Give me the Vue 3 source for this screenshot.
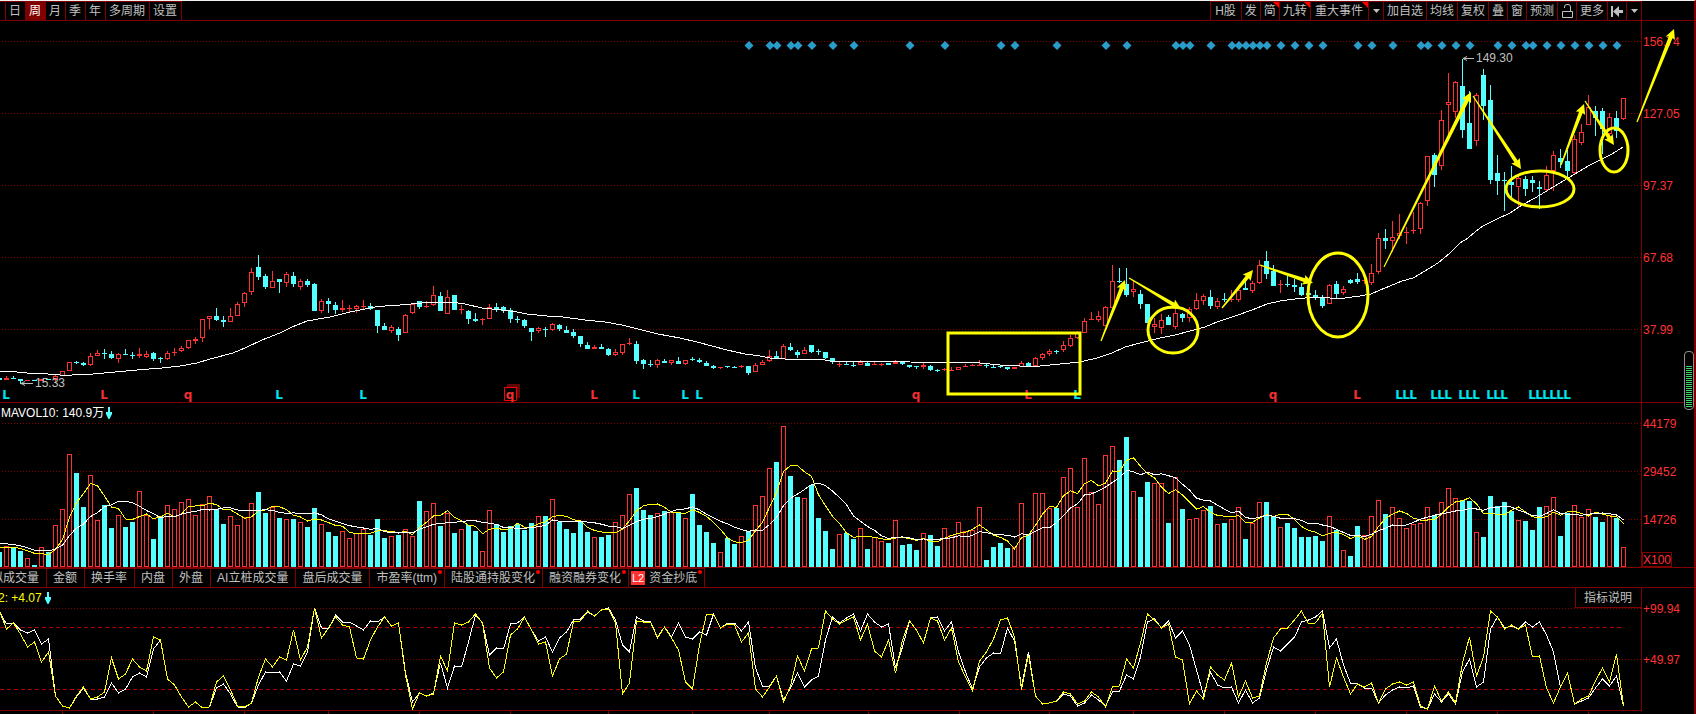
<script setup>
const STEP = 7
const FIRST = -1
const centre = (i) => 6 + STEP * i

/* One entry per week: colour, high, body top, body bottom, low */
const candleRows = `
c 378 378 379 379,r 376 378 379 379,c 376 378 378 378,c 379 379 380 383,r 380 380 380 380,c 380 380 380 380,r 379 379 380 380,c 379 379 379 379,r 375 376 379 382,r 371 371 375 375,
r 362 362 370 370,c 361 362 362 363,c 362 363 364 365,r 353 356 364 365,r 350 353 355 355,c 349 353 353 358,c 351 354 357 358,r 353 354 358 362,c 349 354 354 354,c 352 355 355 358,
r 348 354 355 357,r 351 354 356 357,c 352 353 358 360,c 357 358 358 362,r 351 353 358 359,r 348 352 352 355,r 346 348 350 351,r 340 340 347 348,r 337 339 340 343,r 319 319 337 341,
r 316 316 318 328,c 308 316 319 320,c 316 320 321 326,r 308 316 321 321,r 302 304 315 315,r 292 293 302 306,r 268 272 291 294,c 255 267 276 279,c 274 276 286 288,r 271 281 287 287,
c 279 279 281 292,r 272 274 282 286,c 272 276 283 286,r 279 281 286 289,c 279 281 284 286,c 283 284 310 310,r 299 301 310 312,c 298 301 303 312,c 302 305 309 313,r 300 308 309 311,
r 305 308 308 311,r 305 306 308 312,r 300 306 306 309,c 303 306 308 309,c 310 310 325 332,c 323 326 329 329,r 325 327 330 332,c 327 329 334 340,r 314 315 332 332,r 303 304 312 313,
c 301 301 306 308,r 301 306 306 307,r 286 295 304 305,c 292 296 310 310,r 290 297 313 313,c 295 295 309 309,r 305 309 309 313,c 310 311 318 323,c 313 319 320 321,r 318 319 319 324,
r 304 307 318 318,c 303 307 309 311,c 306 307 310 312,c 308 310 318 322,c 316 319 319 322,c 319 320 325 327,c 328 328 331 340,r 327 328 330 332,c 327 329 329 336,r 323 324 329 330,
c 324 325 328 330,c 326 330 332 332,c 329 332 335 337,c 336 336 343 346,c 342 345 348 348,r 345 347 348 348,c 344 347 348 348,c 348 349 354 355,r 349 352 354 355,r 344 344 352 354,
r 338 343 343 344,c 341 344 360 363,c 359 360 363 368,c 360 364 364 366,r 359 360 364 367,c 359 361 362 362,r 360 360 362 364,c 357 361 363 363,r 360 360 363 364,c 357 359 359 360,
c 358 360 361 362,c 361 363 365 365,c 365 366 367 368,r 367 367 367 368,c 366 366 366 367,c 366 367 367 367,r 365 366 366 367,c 366 366 372 374,r 363 365 371 371,r 360 362 364 364,
r 350 356 360 361,c 351 356 358 358,r 344 346 358 358,c 343 347 349 350,c 350 352 354 357,r 347 350 353 353,c 345 345 351 352,c 349 351 351 354,c 352 352 357 358,c 358 358 361 363,
r 362 364 364 366,c 362 364 364 364,c 362 365 365 366,r 360 362 364 364,c 362 363 365 365,r 362 364 364 364,r 363 364 364 365,c 363 363 364 364,r 360 362 363 363,c 362 362 363 364,
c 365 365 366 367,c 366 366 366 368,r 363 365 366 368,c 365 366 369 370,c 369 370 370 371,r 368 369 369 370,r 367 370 370 370,r 367 367 369 369,r 364 366 366 366,r 364 365 365 365,
r 360 365 365 365,c 364 365 365 367,c 365 367 367 367,c 365 366 366 367,c 367 367 368 369,r 367 367 368 368,r 361 363 366 366,c 362 363 365 365,r 357 358 365 365,r 353 354 357 359,
r 349 351 353 355,c 350 351 351 353,r 341 345 349 351,r 335 338 345 346,r 331 333 337 338,r 318 321 332 332,r 312 319 319 319,r 311 316 319 321,r 306 307 325 325,r 265 281 307 307,
c 268 281 281 282,c 268 284 294 296,r 280 289 291 296,c 290 294 303 308,c 304 304 322 322,r 318 324 326 332,r 314 320 327 333,c 315 317 324 324,r 309 313 326 328,c 313 314 317 321,
r 307 309 317 321,r 293 300 308 309,r 294 296 300 304,c 290 297 305 308,r 298 301 306 308,c 293 299 299 301,r 290 299 299 301,r 285 290 299 301,c 280 288 289 289,r 281 283 290 292,
r 260 265 282 283,c 251 261 273 278,c 265 271 285 285,r 280 284 284 292,c 276 284 284 286,c 279 285 286 291,c 283 287 294 295,c 292 293 294 294,c 290 295 296 299,c 295 297 305 307,
r 284 285 303 303,c 281 284 293 297,r 286 289 292 294,c 279 280 282 283,c 273 279 281 283,r 276 280 280 283,r 264 273 282 284,r 233 238 271 273,c 229 238 240 248,r 221 237 240 251,
r 214 233 235 238,r 227 232 232 243,r 212 230 230 233,r 202 203 228 233,r 156 156 200 205,c 153 155 174 186,r 110 120 165 169,r 73 102 104 140,r 81 82 111 117,c 59 86 129 137,
c 91 123 148 148,r 93 95 140 145,c 69 75 105 119,c 85 100 179 183,c 155 173 180 194,c 172 180 180 210,c 166 182 184 197,r 176 178 186 206,c 176 179 188 195,c 176 180 182 191,
c 181 187 188 208,r 166 175 189 191,r 151 155 170 190,c 149 158 161 167,c 150 161 170 176,r 135 139 172 173,r 124 132 142 144,r 95 107 124 124,c 106 111 117 135,c 108 111 128 153,
r 113 117 133 137,c 111 118 130 137,r 98 98 118 119`

const candles = candleRows.trim().split(',').map((row, n) => {
  const [kind, ...v] = row.trim().split(' ')
  const [high, top, bottom, low] = v.map(Number)
  return { id: n, up: kind === 'r', x: centre(n + FIRST), high, top, bottom, low }
})

const VOLUME_BASE = 567
const earlierVolumes = [539, 539, 539, 539, 539, 546, 546, 546, 546]
const volumeTops = [
  552, 546, 547, 551, 558, 565, 547, 552, 525, 509, 454, 473, 507, 475, 520, 505, 528, 515, 527, 522,
  491, 515, 539, 516, 505, 509, 502, 499, 515, 504, 496, 509, 524, 516, 525, 517, 503, 492, 513, 507,
  518, 519, 519, 522, 527, 508, 524, 532, 536, 531, 538, 533, 529, 535, 519, 538, 536, 535, 529, 536,
  501, 511, 503, 526, 513, 533, 529, 525, 531, 551, 510, 524, 532, 526, 524, 530, 523, 516, 516, 499,
  522, 529, 533, 521, 532, 537, 537, 535, 522, 515, 494, 488, 510, 515, 513, 511, 512, 513, 518, 494,
  525, 532, 543, 552, 538, 544, 536, 531, 505, 496, 468, 462, 426, 476, 497, 498, 485, 518, 531, 549,
  534, 533, 539, 528, 549, 537, 541, 543, 520, 545, 544, 550, 533, 535, 546, 528, 535, 522, 531, 530,
  507, 560, 547, 543, 548, 547, 503, 535, 493, 493, 508, 508, 477, 468, 507, 458, 492, 504, 455, 446,
  460, 437, 491, 497, 482, 483, 483, 523, 477, 509, 519, 518, 510, 506, 524, 523, 519, 507, 539, 523,
  502, 502, 517, 527, 523, 528, 537, 537, 536, 541, 516, 530, 550, 556, 526, 535, 516, 500, 514, 507,
  518, 528, 524, 523, 507, 515, 502, 488, 498, 500, 501, 532, 537, 496, 506, 502, 511, 520, 521, 530,
  507, 506, 497, 536, 513, 505, 517, 509, 517, 522, 515, 518, 547,
]
const allVolumes = [...earlierVolumes, ...volumeTops]

function average(period) {
  return volumeTops.map((_, n) => {
    const end = n + earlierVolumes.length + 1
    const sum = allVolumes.slice(end - period, end).reduce((a, b) => a + b, 0)
    return sum / period
  })
}
const toPoints = (ys) => ys.map((y, n) => `${centre(n + FIRST) + 0.5},${y}`).join(' ')
const volumeMa5 = toPoints(average(5))
const volumeMa10 = toPoints(average(10))

const priceMa =
  '0,371 17,372 27,373 48,374 60,375 72,375 93,374 115,372 137,370 162,368 180,366 197,363 210,359 233,353 245,348 262,340 280,333 292,327 307,321 330,317 350,312 365,309 375,307 385,306 400,305 422,303 430,302 450,302 465,304 482,308 502,310 517,312 527,314 547,316 563,317 585,320 605,322 622,325 642,330 658,334 680,338 697,342 712,346 727,350 745,354 760,356 770,358 785,359 820,359 830,361 860,361 905,361 910,362 980,363 1000,365 1020,366 1040,366 1060,364 1080,362 1097,358 1112,353 1125,347 1140,343 1160,338 1175,335 1190,331 1205,327 1217,322 1235,316 1252,310 1267,304 1280,301 1295,299 1315,297 1330,298 1345,298 1360,296 1371,294 1380,290 1390,286 1402,281 1413,278 1425,271 1438,263 1450,253 1460,243 1468,238 1475,232 1483,226 1497,219 1510,213 1522,205 1535,198 1550,189 1568,178 1580,171 1590,165 1600,160 1612,154 1623,147'

const fastLine = toPoints([
  611, 629, 623, 634, 647, 642, 662, 652, 696, 706, 708, 696, 687, 699, 697, 692, 658, 679, 674, 659,
  667, 671, 637, 640, 679, 685, 697, 707, 702, 708, 707, 682, 676, 690, 706, 707, 703, 677, 659, 667,
  657, 660, 630, 660, 647, 608, 638, 628, 617, 625, 627, 658, 659, 640, 627, 617, 626, 623, 675, 709,
  693, 696, 694, 656, 671, 623, 625, 622, 614, 623, 668, 678, 672, 635, 629, 617, 630, 644, 642, 676,
  659, 654, 622, 621, 611, 616, 610, 609, 623, 694, 683, 621, 622, 622, 638, 627, 638, 650, 682, 689,
  645, 614, 614, 628, 624, 625, 642, 633, 689, 697, 687, 676, 702, 686, 656, 671, 649, 648, 611, 619,
  624, 620, 617, 640, 624, 651, 657, 640, 673, 640, 621, 630, 643, 618, 621, 640, 628, 662, 677, 691,
  661, 652, 639, 620, 618, 637, 690, 655, 696, 704, 703, 701, 692, 694, 704, 701, 692, 697, 707, 687,
  686, 659, 668, 643, 614, 620, 628, 624, 657, 660, 704, 691, 699, 667, 675, 680, 663, 697, 681, 698,
  696, 663, 638, 629, 628, 620, 611, 624, 623, 613, 687, 658, 677, 694, 684, 687, 683, 703, 689, 684,
  682, 685, 682, 706, 709, 686, 701, 692, 703, 663, 637, 676, 657, 611, 617, 629, 625, 629, 625, 657,
  656, 688, 703, 687, 673, 704, 699, 696, 681, 668, 682, 654, 706,
])
const slowLine = toPoints([
  612, 624, 623, 630, 633, 630, 644, 639, 696, 706, 708, 697, 688, 699, 699, 697, 683, 693, 689, 677,
  673, 677, 649, 640, 679, 685, 697, 707, 702, 708, 707, 688, 684, 694, 707, 708, 703, 685, 672, 673,
  672, 681, 664, 666, 652, 608, 628, 629, 615, 622, 622, 626, 630, 621, 622, 617, 626, 623, 673, 702,
  693, 696, 693, 663, 688, 666, 667, 642, 615, 623, 655, 648, 649, 624, 623, 617, 630, 641, 637, 652,
  638, 632, 620, 619, 612, 616, 610, 608, 620, 645, 652, 617, 621, 622, 637, 627, 637, 623, 637, 639,
  632, 635, 614, 628, 623, 623, 631, 622, 668, 686, 686, 676, 700, 688, 673, 687, 680, 676, 640, 617,
  623, 618, 614, 631, 614, 622, 627, 624, 668, 647, 621, 630, 643, 618, 617, 631, 622, 652, 672, 689,
  667, 658, 653, 654, 628, 641, 687, 652, 696, 704, 703, 701, 694, 696, 706, 703, 695, 700, 706, 692,
  691, 675, 679, 657, 622, 619, 628, 621, 638, 631, 645, 670, 695, 672, 685, 688, 687, 703, 690, 703,
  698, 670, 647, 651, 644, 637, 622, 620, 617, 611, 648, 639, 665, 683, 684, 688, 688, 703, 695, 690,
  687, 688, 686, 707, 709, 694, 702, 694, 704, 672, 659, 687, 682, 629, 617, 628, 626, 629, 622, 627,
  622, 635, 652, 687, 673, 704, 701, 698, 688, 679, 686, 676, 706,
])

const diamonds = [
  106, 109, 110, 112, 113, 115, 118, 121, 129, 134, 142, 144, 150, 157, 160, 167, 168, 169, 172, 175,
  176, 177, 178, 179, 180, 182, 184, 186, 188, 193, 195, 198, 202, 203, 205, 207, 209, 213, 215, 217,
  218, 220, 222, 224, 226, 228, 230,
]
const marks = [
  ...[14, 84, 146, 193].map((i) => ({ i, t: 'L', c: 'mark-red' })),
  ...[26, 72, 130, 181].map((i) => ({ i, t: 'q', c: 'mark-red' })),
  ...[0, 39, 51, 90, 97, 99, 153, 199, 200, 201, 204, 205, 206, 208, 209, 210, 212, 213, 214, 218, 219,
    220, 221, 222, 223].map((i) => ({ i, t: 'L', c: 'mark-cyan' })),
]

const priceTicks = [
  { y: 41, t: '156.74' },
  { y: 113, t: '127.05' },
  { y: 185, t: '97.37' },
  { y: 257, t: '67.68' },
  { y: 329, t: '37.99' },
]
const volumeTicks = [
  { y: 423, t: '44179' },
  { y: 471, t: '29452' },
  { y: 519, t: '14726' },
]
const oscTicks = [
  { y: 608, t: '+99.94' },
  { y: 659, t: '+49.97' },
]
const timeTicks = [62, 153, 244, 328, 419, 510, 608, 692, 769, 868, 959, 1049, 1133, 1224, 1315, 1406, 1497, 1588]

/* Tapered arrow: hair-thin tail, thick neck, solid head */
function arrow([x1, y1, x2, y2]) {
  const len = Math.hypot(x2 - x1, y2 - y1)
  const ux = (x2 - x1) / len
  const uy = (y2 - y1) / len
  const at = (along, side) =>
    `${(x1 + ux * along - uy * side).toFixed(1)},${(y1 + uy * along + ux * side).toFixed(1)}`
  const neck = len - 9
  return [at(0, 0.6), at(neck, 2), at(neck - 1, 5), at(len, 0), at(neck - 1, -5), at(neck, -2), at(0, -0.6)].join(' ')
}
const arrows = [
  [1101, 341, 1125, 280],
  [1129, 278, 1181, 309],
  [1222, 308, 1253, 270],
  [1260, 265, 1313, 283],
  [1384, 267, 1471, 92],
  [1473, 96, 1521, 169],
  [1561, 165, 1584, 104],
  [1585, 101, 1614, 145],
  [1637, 122, 1674, 29],
].map(arrow)

const periods = ['日', '周', '月', '季', '年', '多周期', '设置']
const tools = [
  { t: 'H股', wide: true },
  { t: '发' },
  { t: '简', flag: true },
  { t: '九转', flag: true },
  { t: '重大事件', flag: true, wide: true },
  { icon: 'down', label: '事件菜单' },
  { t: '加自选' },
  { t: '均线' },
  { t: '复权' },
  { t: '叠' },
  { t: '窗' },
  { t: '预测' },
  { icon: 'lock', label: '锁定' },
  { t: '更多' },
  { icon: 'back', label: '收起' },
  { icon: 'down', label: '更多菜单' },
]
const tabs = [
  { t: '拟成交量' },
  { t: '金额' },
  { t: '换手率' },
  { t: '内盘' },
  { t: '外盘' },
  { t: 'AI立桩成交量' },
  { t: '盘后成交量' },
  { t: '市盈率(ttm)', dot: true },
  { t: '陆股通持股变化', dot: true },
  { t: '融资融券变化', dot: true },
  { t: '资金抄底', dot: true, badge: 'L2' },
]
</script>

<template>
  <main class="terminal">
    <header class="toolbar">
      <nav class="group periods">
        <button v-for="p in periods" :key="p" type="button" :class="{ active: p === '周' }">{{ p }}</button>
      </nav>
      <nav class="group tools">
        <button
          v-for="(b, n) in tools"
          :key="n"
          type="button"
          :class="{ wide: b.wide, flag: b.flag }"
          :aria-label="b.label"
        >
          <template v-if="b.t">{{ b.t }}</template>
          <svg v-else-if="b.icon === 'down'" class="i-down" viewBox="0 0 7 4"><path d="M0 0H7L3.5 4Z" /></svg>
          <svg v-else-if="b.icon === 'lock'" class="i-lock" viewBox="0 0 12 14">
            <path d="M1.5 7.500H11.500V13.500H1.500ZM3.500 4V3Q3.500 .5 6 .5H7Q9.500 .5 9.500 3V7" />
          </svg>
          <svg v-else class="i-back" viewBox="0 0 12 11">
            <path d="M0 0H2V11H0ZM2 5.500L8 0V4H12V7H8V11Z" />
          </svg>
        </button>
      </nav>
    </header>

    <svg class="panel" viewBox="0 21 1694 382" role="img" aria-label="周K线">
      <g class="crisp">
        <path v-for="t in priceTicks" :key="t.t" class="dots" :d="`M2 ${t.y}.5H1641`" />
        <path class="frame" d="M1641.5 21V403M0 402.500H1694" />
        <g v-for="c in candles" :key="c.id" :class="c.up ? 'up' : 'down'">
          <rect class="solid" :x="c.x" :y="c.high" width="1" :height="c.low - c.high + 1" />
          <rect v-if="!c.up || c.bottom - c.top < 2" class="solid" :x="c.x - 2" :y="c.top" width="5" :height="c.bottom - c.top + 1" />
          <rect v-else class="hollow" :x="c.x - 1.5" :y="c.top + 0.5" width="4" :height="c.bottom - c.top" />
        </g>
        <polyline class="white-line" :points="priceMa" />
      </g>
      <path v-for="i in diamonds" :key="i" class="diamond" :d="`M${centre(i) + 1} 41l4.500 4.500l-4.500 4.500l-4.500-4.500z`" />

      <path class="mark-shade" d="M507 384H520V398H507Z" />
      <path class="mark-box" d="M504.500 387.500H516.500V400.500H504.500Z" />
      <text v-for="m in marks" :key="m.t + m.i" class="mark" :class="m.c" :x="centre(m.i)" y="399">{{ m.t }}</text>

      <path class="pointer" d="M1463 58.500H1474M1467 56.500L1463 58.500L1467 60.500M21 383.500H33M25 381.500L21 383.500L25 385.500" />
      <text class="note" x="1476" y="62">149.30</text>
      <text class="note" x="35" y="387">15.33</text>

      <text v-for="t in priceTicks" :key="'l' + t.t" class="axis" x="1643" :y="t.y + 5">{{ t.t }}</text>

      <g class="drawing">
        <rect x="948" y="333" width="132" height="61" />
        <ellipse cx="1173" cy="330" rx="25" ry="23" />
        <ellipse cx="1338" cy="295" rx="30" ry="42" />
        <ellipse cx="1540" cy="189" rx="34" ry="18" />
        <ellipse cx="1614" cy="150" rx="14" ry="22" />
      </g>
      <polygon v-for="(a, n) in arrows" :key="n" class="arrow" :points="a" />
    </svg>

    <svg class="panel" viewBox="0 403 1694 165" role="img" aria-label="成交量">
      <g class="crisp">
        <path v-for="t in volumeTicks" :key="t.t" class="dots" :d="`M2 ${t.y}.5H1641`" />
        <path class="frame" d="M1641.500 403V568M0 567.500H1694" />
        <path class="frame" d="M1642.500 552.500H1671.500V566.500H1642.500Z" />
        <g v-for="(c, n) in candles" :key="c.id" :class="c.up ? 'up' : 'down'">
          <rect v-if="c.up" class="hollow" :x="c.x - 1.5" :y="volumeTops[n] + 0.5" width="4" :height="VOLUME_BASE - volumeTops[n] - 1" />
          <rect v-else class="solid" :x="c.x - 2" :y="volumeTops[n]" width="5" :height="VOLUME_BASE - volumeTops[n]" />
        </g>
        <polyline class="yellow-line" :points="volumeMa5" />
        <polyline class="white-line" :points="volumeMa10" />
      </g>
      <text class="legend" x="1" y="417">MAVOL10: 140.9万</text>
      <path class="trend" d="M108 407H110V412H112V414L109.500 419H108.500L106 414V412H108Z" />
      <text v-for="t in volumeTicks" :key="'l' + t.t" class="axis" x="1643" :y="t.y + 5">{{ t.t }}</text>
      <text class="axis" x="1643" y="564">X100</text>
    </svg>

    <nav class="tabs">
      <button v-for="t in tabs" :key="t.t" type="button" :class="{ dot: t.dot, badged: t.badge }">
        <b v-if="t.badge" class="badge">{{ t.badge }}</b>{{ t.t }}
      </button>
    </nav>

    <section class="oscillator">
      <svg class="panel" viewBox="0 588 1694 126" role="img" aria-label="指标">
        <g class="crisp">
          <path v-for="t in oscTicks" :key="t.t" class="dots" :d="`M2 ${t.y}.5H1641`" />
          <path class="dashes" d="M0 627.500H1624M0 689.500H1624" />
          <path class="frame" d="M1641.500 588V710M0 710.500H1642" />
          <path v-for="x in timeTicks" :key="x" class="frame" :d="`M${x}.5 710V714`" />
          <polyline class="white-line" :points="slowLine" />
          <polyline class="yellow-line" :points="fastLine" />
        </g>
        <text class="legend legend-yellow" x="-2" y="602">2: +4.07</text>
        <path class="trend" d="M47 592H49V597H51V599L48.500 604H47.500L45 599V597H47Z" />
        <text v-for="t in oscTicks" :key="'l' + t.t" class="axis" x="1643" :y="t.y + 5">{{ t.t }}</text>
      </svg>
      <button type="button" class="explain">指标说明</button>
    </section>

    <aside class="gauge"><i></i></aside>
  </main>
</template>

<style>
body {
  margin: 0;
  background: #000;
}
</style>

<style scoped>
.terminal {
  position: relative;
  box-sizing: border-box;
  overflow: hidden;
  background: #000;
  border-top: 1px solid #f0f0f0;
  border-right: 2px solid #800000;
  color: #c0c0c0;
  font: 12px/18px "Liberation Sans", "Noto Sans CJK SC", sans-serif;
}
button {
  position: relative;
  display: flex;
  align-items: center;
  margin: 0;
  padding: 0 3px;
  border: 0;
  border-left: 1px solid #800000;
  background: none;
  color: inherit;
  font: inherit;
  white-space: nowrap;
}
.toolbar {
  display: flex;
  justify-content: space-between;
  border-bottom: 1px solid #800000;
}
.group {
  display: flex;
  height: 19px;
  box-sizing: border-box;
  border-top: 1px solid #800000;
  border-right: 1px solid #800000;
}
.periods {
  padding-left: 5px;
}
.periods button {
  padding: 0 4px 0 3px;
}
.periods .active {
  background: #800000;
  color: #fff;
}
.tools {
  margin-right: 52px;
}
.tools .wide {
  padding: 0 5px 0 4px;
}
.flag::after {
  content: "";
  position: absolute;
  top: 0;
  right: 0;
  border-top: 6px solid #f00;
  border-left: 6px solid transparent;
}
.i-down {
  width: 7px;
  height: 4px;
  margin-left: 1px;
  fill: #c0c0c0;
}
.i-lock {
  width: 12px;
  height: 14px;
  fill: none;
  stroke: #c0c0c0;
}
.i-back {
  width: 12px;
  height: 11px;
  fill: #c0c0c0;
}
.panel {
  display: block;
  width: 100%;
  height: auto;
}
.crisp {
  shape-rendering: crispEdges;
}
.frame {
  fill: none;
  stroke: #800000;
}
.dots {
  fill: none;
  stroke: #800000;
  stroke-dasharray: 1 2;
}
.dashes {
  fill: none;
  stroke: #b00000;
  stroke-dasharray: 4 3;
}
.up .solid {
  fill: #ff3232;
}
.up .hollow {
  fill: #000;
  stroke: #ff3232;
}
.down .solid {
  fill: #54ffff;
}
.white-line {
  fill: none;
  stroke: #fff;
}
.yellow-line {
  fill: none;
  stroke: #ff0;
}
.diamond {
  fill: #2a9cca;
}
.mark {
  font: bold 12px "DejaVu Sans", sans-serif;
  text-anchor: middle;
}
.mark-red {
  fill: #f03030;
}
.mark-cyan {
  fill: #00e4ec;
}
.mark-shade {
  fill: #600808;
}
.mark-box {
  fill: #000;
  stroke: #f00;
}
.pointer {
  fill: none;
  stroke: #c0c0c0;
}
.note {
  fill: #c0c0c0;
  font-size: 12px;
}
.axis {
  fill: #ff3232;
  font-size: 12px;
}
.legend {
  fill: #fff;
  font-size: 12px;
}
.legend-yellow {
  fill: #ff0;
}
.trend {
  fill: #54ffff;
}
.drawing {
  fill: none;
  stroke: #ff0;
  stroke-width: 3;
}
.arrow {
  fill: #ff0;
}
.tabs {
  display: flex;
  height: 20px;
  box-sizing: border-box;
  border-bottom: 1px solid #800000;
}
.tabs button {
  padding: 0 7px 0 6px;
  border-top: 1px solid #800000;
}
.tabs button:first-child {
  width: 46px;
  justify-content: flex-end;
  border-left: 0;
  overflow: hidden;
}
.tabs button:last-child {
  border-right: 1px solid #800000;
}
.tabs .badged {
  gap: 4px;
  padding-left: 2px;
}
.dot::after {
  content: "";
  position: absolute;
  top: 1px;
  right: 2px;
  width: 4px;
  height: 4px;
  border-radius: 2px;
  background: #f00;
}
.badge {
  width: 14px;
  height: 14px;
  background: #ff3232;
  color: #fff;
  line-height: 14px;
  font-size: 11px;
  font-weight: 400;
  text-align: center;
}
.oscillator {
  position: relative;
}
.explain {
  position: absolute;
  top: 0;
  right: 53px;
  height: 20px;
  padding: 0 9px 0 8px;
  border-bottom: 1px solid #800000;
  background: #000;
}
.gauge {
  position: absolute;
  top: 350px;
  right: 0;
  box-sizing: border-box;
  width: 10px;
  height: 59px;
  padding: 14px 1px 2px;
  border: 1px solid #909090;
  border-radius: 4px;
  background: #000;
}
.gauge i {
  display: block;
  height: 100%;
  background: repeating-linear-gradient(#3cd868 0 1px, #000 1px 2px);
}
</style>
